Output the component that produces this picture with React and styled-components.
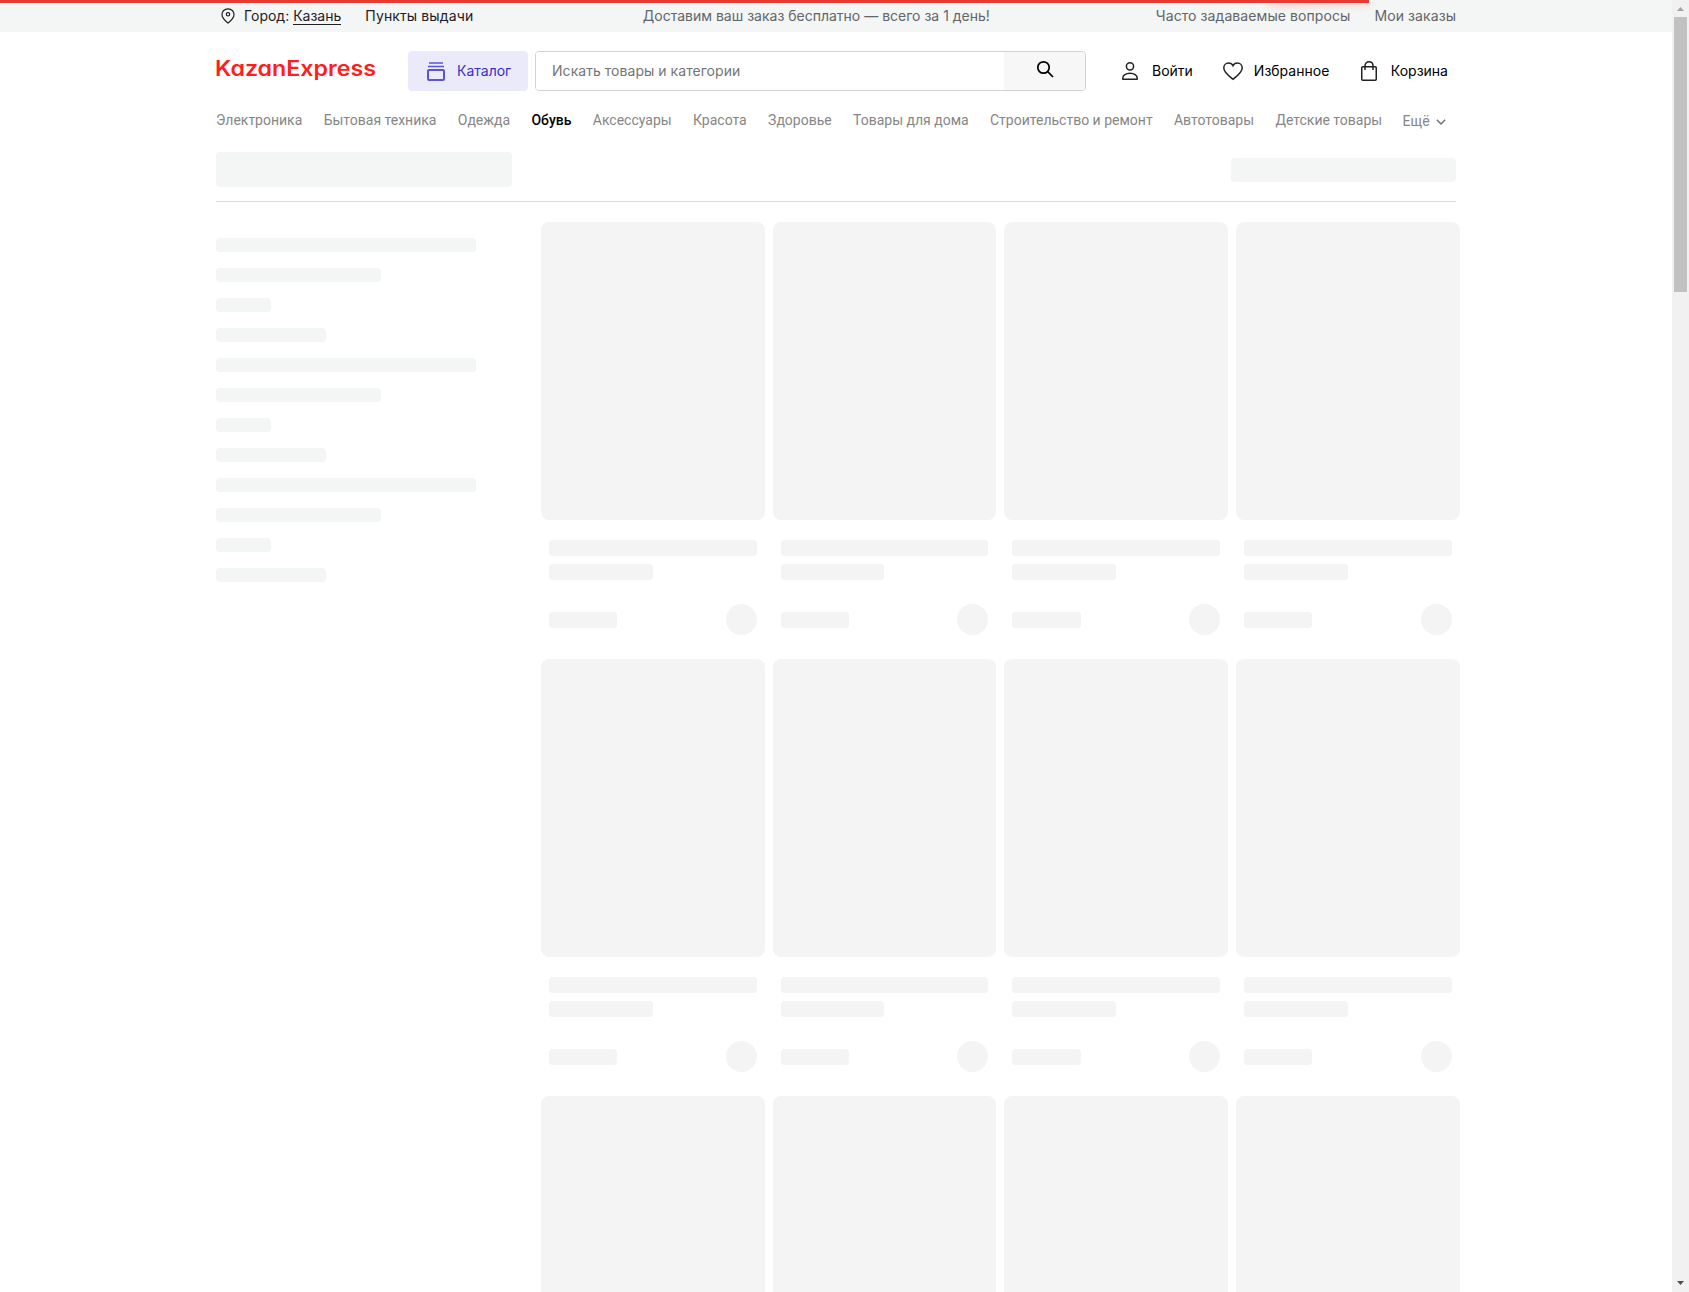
import React from "react";
import styled, { createGlobalStyle } from "styled-components";

const GlobalStyle = createGlobalStyle`
  * { box-sizing: border-box; }
  html, body { margin: 0; padding: 0; height: 100%; overflow: hidden; background: #fff; }
  body { font-family: Inter, "Liberation Sans", sans-serif; font-size: 14px; color: #000; }
  button { font: inherit; border: 0; padding: 0; margin: 0; }
`;

const Window = styled.div`
  display: flex;
  height: 1292px;
  overflow: hidden;
`;

const Page = styled.div`
  position: relative;
  flex: 1;
  height: 100%;
  overflow: hidden;
`;

const Progress = styled.div`
  position: absolute;
  z-index: 2;
  top: 0;
  left: 0;
  width: 1369px;
  height: 3px;
  background: #e93a32;
  &::after {
    content: "";
    position: absolute;
    right: 0;
    top: -1px;
    width: 100px;
    height: 3px;
    box-shadow: 0 0 10px rgba(233, 58, 50, 0.7);
    clip-path: inset(4px -12px -12px -12px);
    transform: rotate(-1deg);
  }
`;

const Container = styled.div`
  width: 1240px;
  margin-left: 216px;
`;

const TopBar = styled.div`
  height: 32px;
  background: #f4f6f5;
`;

const TopInner = styled(Container)`
  display: flex;
  align-items: center;
  height: 32px;
  line-height: 20px;
  padding-left: 5px;
  white-space: nowrap;
`;

const TopText = styled.span`
  color: ${(p) => p.$color || "#1f2026"};
  letter-spacing: ${(p) => p.$spacing || "0"};
  margin-left: ${(p) => p.$left || 0}px;
`;

const City = styled.span`
  border-bottom: 1px solid #1f2026;
  display: inline-block;
  line-height: 17px;
`;

const Header = styled(Container)`
  display: flex;
  align-items: center;
  height: 40px;
  margin-top: 19px;
`;

const Logo = styled.svg`
  display: block;
  width: 162px;
  height: 28px;
  margin-right: 30px;
  overflow: visible;
  font-family: Inter, Lato, sans-serif;
  font-weight: 600;
  font-feature-settings: "cv11";
`;

const CatalogButton = styled.button`
  display: flex;
  align-items: center;
  width: 120px;
  height: 40px;
  padding-left: 18px;
  gap: 11px;
  border-radius: 4px;
  background: #ebeaf9;
  color: #3730c4;
`;

const Label = styled.span`
  padding-bottom: 2px;
`;

const Search = styled.form`
  display: flex;
  width: 551px;
  height: 40px;
  margin-left: 7px;
  border: 1px solid #d2d2d2;
  border-radius: 4px;
  overflow: hidden;
`;

const SearchInput = styled.input`
  flex: 1;
  min-width: 0;
  border: 0;
  outline: 0;
  padding: 0 16px 1px;
  font: inherit;
  letter-spacing: 0.04px;
  &::placeholder { color: #757575; opacity: 1; }
`;

const SearchButton = styled.button`
  display: flex;
  justify-content: center;
  width: 81px;
  padding: 8px 0 0 1px;
  background: #f7f7f7;
`;

const Action = styled.a`
  display: flex;
  align-items: center;
  gap: ${(p) => p.$gap}px;
  margin-left: ${(p) => p.$left}px;
  white-space: nowrap;
`;

const Icon = styled.svg`
  display: block;
  flex: none;
  fill: none;
  stroke: ${(p) => p.$color || "#222"};
  stroke-width: ${(p) => p.$weight || 1.5};
`;

const Chevron = styled(Icon)`
  margin-top: 3px;
`;

const Nav = styled(Container)`
  display: flex;
  height: 24px;
  margin-top: 17px;
  line-height: 24px;
  font-family: Roboto, "Liberation Sans", sans-serif;
  font-size: 14px;
  white-space: nowrap;
`;

const NavItem = styled.a`
  margin-right: 21.35px;
  color: ${(p) => (p.$active ? "#000" : "#868686")};
  font-weight: ${(p) => (p.$active ? 500 : 400)};
`;

const More = styled(NavItem)`
  display: flex;
  align-items: center;
  gap: 6px;
  margin: 1px 0 0 -1px;
`;

const Title = styled(Container)`
  display: flex;
  justify-content: space-between;
  height: 50px;
  margin-top: 20px;
  border-bottom: 1px solid #dedede;
`;

const Bone = styled.div`
  flex: none;
  width: ${(p) => p.$w};
  height: ${(p) => p.$h}px;
  margin-top: ${(p) => p.$top || 0}px;
  border-radius: 4px;
  background: ${(p) => (p.$neutral ? "#f4f4f4" : "#f4f6f5")};
`;

const Body = styled(Container)`
  display: flex;
`;

const Sidebar = styled.aside`
  display: flex;
  flex: none;
  flex-direction: column;
  gap: 16px;
  width: 324.94px;
  padding-top: 36px;
`;

const Grid = styled.main`
  flex: none;
  display: grid;
  grid-template-columns: repeat(4, 1fr);
  grid-auto-rows: 437px;
  column-gap: 8px;
  width: 918.7px;
  padding-top: 20px;
`;

const Photo = styled.div`
  height: 298px;
  border-radius: 8px;
  background: #f4f4f4;
`;

const Details = styled.div`
  display: flex;
  flex-direction: column;
  gap: 8px;
  padding: 20px 8px 0;
`;

const PriceRow = styled.div`
  display: flex;
  justify-content: space-between;
  margin-top: 16px;
`;

const Dot = styled.div`
  width: 31px;
  height: 31px;
  border-radius: 50%;
  background: #f4f4f4;
`;

const Scrollbar = styled.div`
  display: flex;
  flex-direction: column;
  align-items: center;
  width: 17px;
  height: 100%;
  background: #f1f1f1;
`;

const Thumb = styled.div`
  width: 13px;
  height: 275px;
  margin-bottom: auto;
  background: #c1c1c1;
`;

const Arrow = styled.svg`
  display: block;
  width: 17px;
  height: 17px;
  fill: ${(p) => p.$fill};
`;

const categories = [
  "Электроника", "Бытовая техника", "Одежда", "Обувь", "Аксессуары", "Красота",
  "Здоровье", "Товары для дома", "Строительство и ремонт", "Автотовары", "Детские товары",
];
const filters = [260, 165, 55, 110, 260, 165, 55, 110, 260, 165, 55, 110];

function Card() {
  return (
    <div>
      <Photo />
      <Details>
        <Bone $neutral $w="100%" $h={16} />
        <Bone $neutral $w="50%" $h={16} />
        <PriceRow>
          <Bone $neutral $w="33%" $h={16} $top={8} />
          <Dot />
        </PriceRow>
      </Details>
    </div>
  );
}

export default function App() {
  return (
    <>
      <GlobalStyle />
      <Window>
        <Page>
          <Progress />
          <TopBar>
            <TopInner>
              <Icon width="14" height="16" viewBox="0 0 14 16" $weight={1.2}>
                <path d="M7 .8C3.4.8 1 3.4 1 6.5 1 10.500 4.500 13 7 15.100 9.500 13 13 10.500 13 6.500 13 3.400 10.600.8 7 .8Z" />
                <circle cx="7" cy="6.300" r="1.700" />
              </Icon>
              <TopText $left={9}>Город: <City>Казань</City></TopText>
              <TopText $left={24} $spacing="0.12px">Пункты выдачи</TopText>
              <TopText $left={169.500} $color="#62656a">Доставим ваш заказ бесплатно — всего за 1 день!</TopText>
              <TopText $left={166} $color="#62656a" $spacing="0.08px">Часто задаваемые вопросы</TopText>
              <TopText $left={24} $color="#62656a" $spacing="0.1px">Мои заказы</TopText>
            </TopInner>
          </TopBar>
          <Header>
            <Logo viewBox="0 0 162 28">
              <text x="-1" y="18.700" fontSize="21" fill="#ff1d1d" textLength="161" lengthAdjust="spacingAndGlyphs">KazanExpress</text>
            </Logo>
            <CatalogButton>
              <Icon width="20" height="20" viewBox="0 0 20 20" $color="#5b55d6" $weight={2}>
                <path d="M3 2H17M2 5.500H18" strokeWidth="1.700" />
                <rect x="2" y="9" width="16" height="10" rx="1" />
              </Icon>
              <Label>Каталог</Label>
            </CatalogButton>
            <Search>
              <SearchInput placeholder="Искать товары и категории" />
              <SearchButton type="button">
                <Icon width="18" height="18" viewBox="0 0 18 18" $color="#000" $weight={1.7}>
                  <circle cx="7.500" cy="7.500" r="5.700" />
                  <path d="M11.700 11.700 17 17" />
                </Icon>
              </SearchButton>
            </Search>
            <Action $left={35} $gap={13}>
              <Icon width="18" height="20" viewBox="0 0 18 20">
                <circle cx="9" cy="5.300" r="3.600" />
                <path d="M1.800 18.200V17C1.800 14.300 4.800 12.200 9 12.200S16.200 14.300 16.200 17V18.200Z" strokeLinejoin="round" />
              </Icon>
              <Label>Войти</Label>
            </Action>
            <Action $left={30} $gap={11}>
              <Icon width="20" height="20" viewBox="0 0 20 20">
                <path d="M10 18.300C7 15.700.8 11.300.8 6.900.8 4.100 2.900 2 5.500 2 7.500 2 9.200 3.100 10 4.700 10.800 3.100 12.500 2 14.500 2 17.100 2 19.200 4.100 19.200 6.900 19.200 11.300 13 15.700 10 18.300Z" />
              </Icon>
              <Label>Избранное</Label>
            </Action>
            <Action $left={31} $gap={12.500}>
              <Icon width="18" height="20" viewBox="0 0 18 20">
                <rect x="1.750" y="5.750" width="14.500" height="13.500" rx="1" />
                <path d="M5 9V4.800C5 2.500 6.700.8 9 .8S13 2.500 13 4.800V9" />
              </Icon>
              <Label>Корзина</Label>
            </Action>
          </Header>
          <Nav>
            {categories.map((name) => (
              <NavItem key={name} $active={name === "Обувь"}>{name}</NavItem>
            ))}
            <More>
              Ещё
              <Chevron width="10" height="6" viewBox="0 0 10 6" $color="#70757a">
                <path d="M.8.8 5 5 9.200.8" />
              </Chevron>
            </More>
          </Nav>
          <Title>
            <Bone $w="296px" $h={35} />
            <Bone $w="225px" $h={24} $top={6} />
          </Title>
          <Body>
            <Sidebar>
              {filters.map((w, i) => <Bone key={i} $w={`${w}px`} $h={14} />)}
            </Sidebar>
            <Grid>
              {Array.from({ length: 12 }, (_, i) => <Card key={i} />)}
            </Grid>
          </Body>
        </Page>
        <Scrollbar>
          <Arrow $fill="#a3a3a3" viewBox="0 0 17 17"><path d="M5 11 8.500 7 12 11Z" /></Arrow>
          <Thumb />
          <Arrow $fill="#505050" viewBox="0 0 17 17"><path d="M5 6H12L8.500 10Z" /></Arrow>
        </Scrollbar>
      </Window>
    </>
  );
}
